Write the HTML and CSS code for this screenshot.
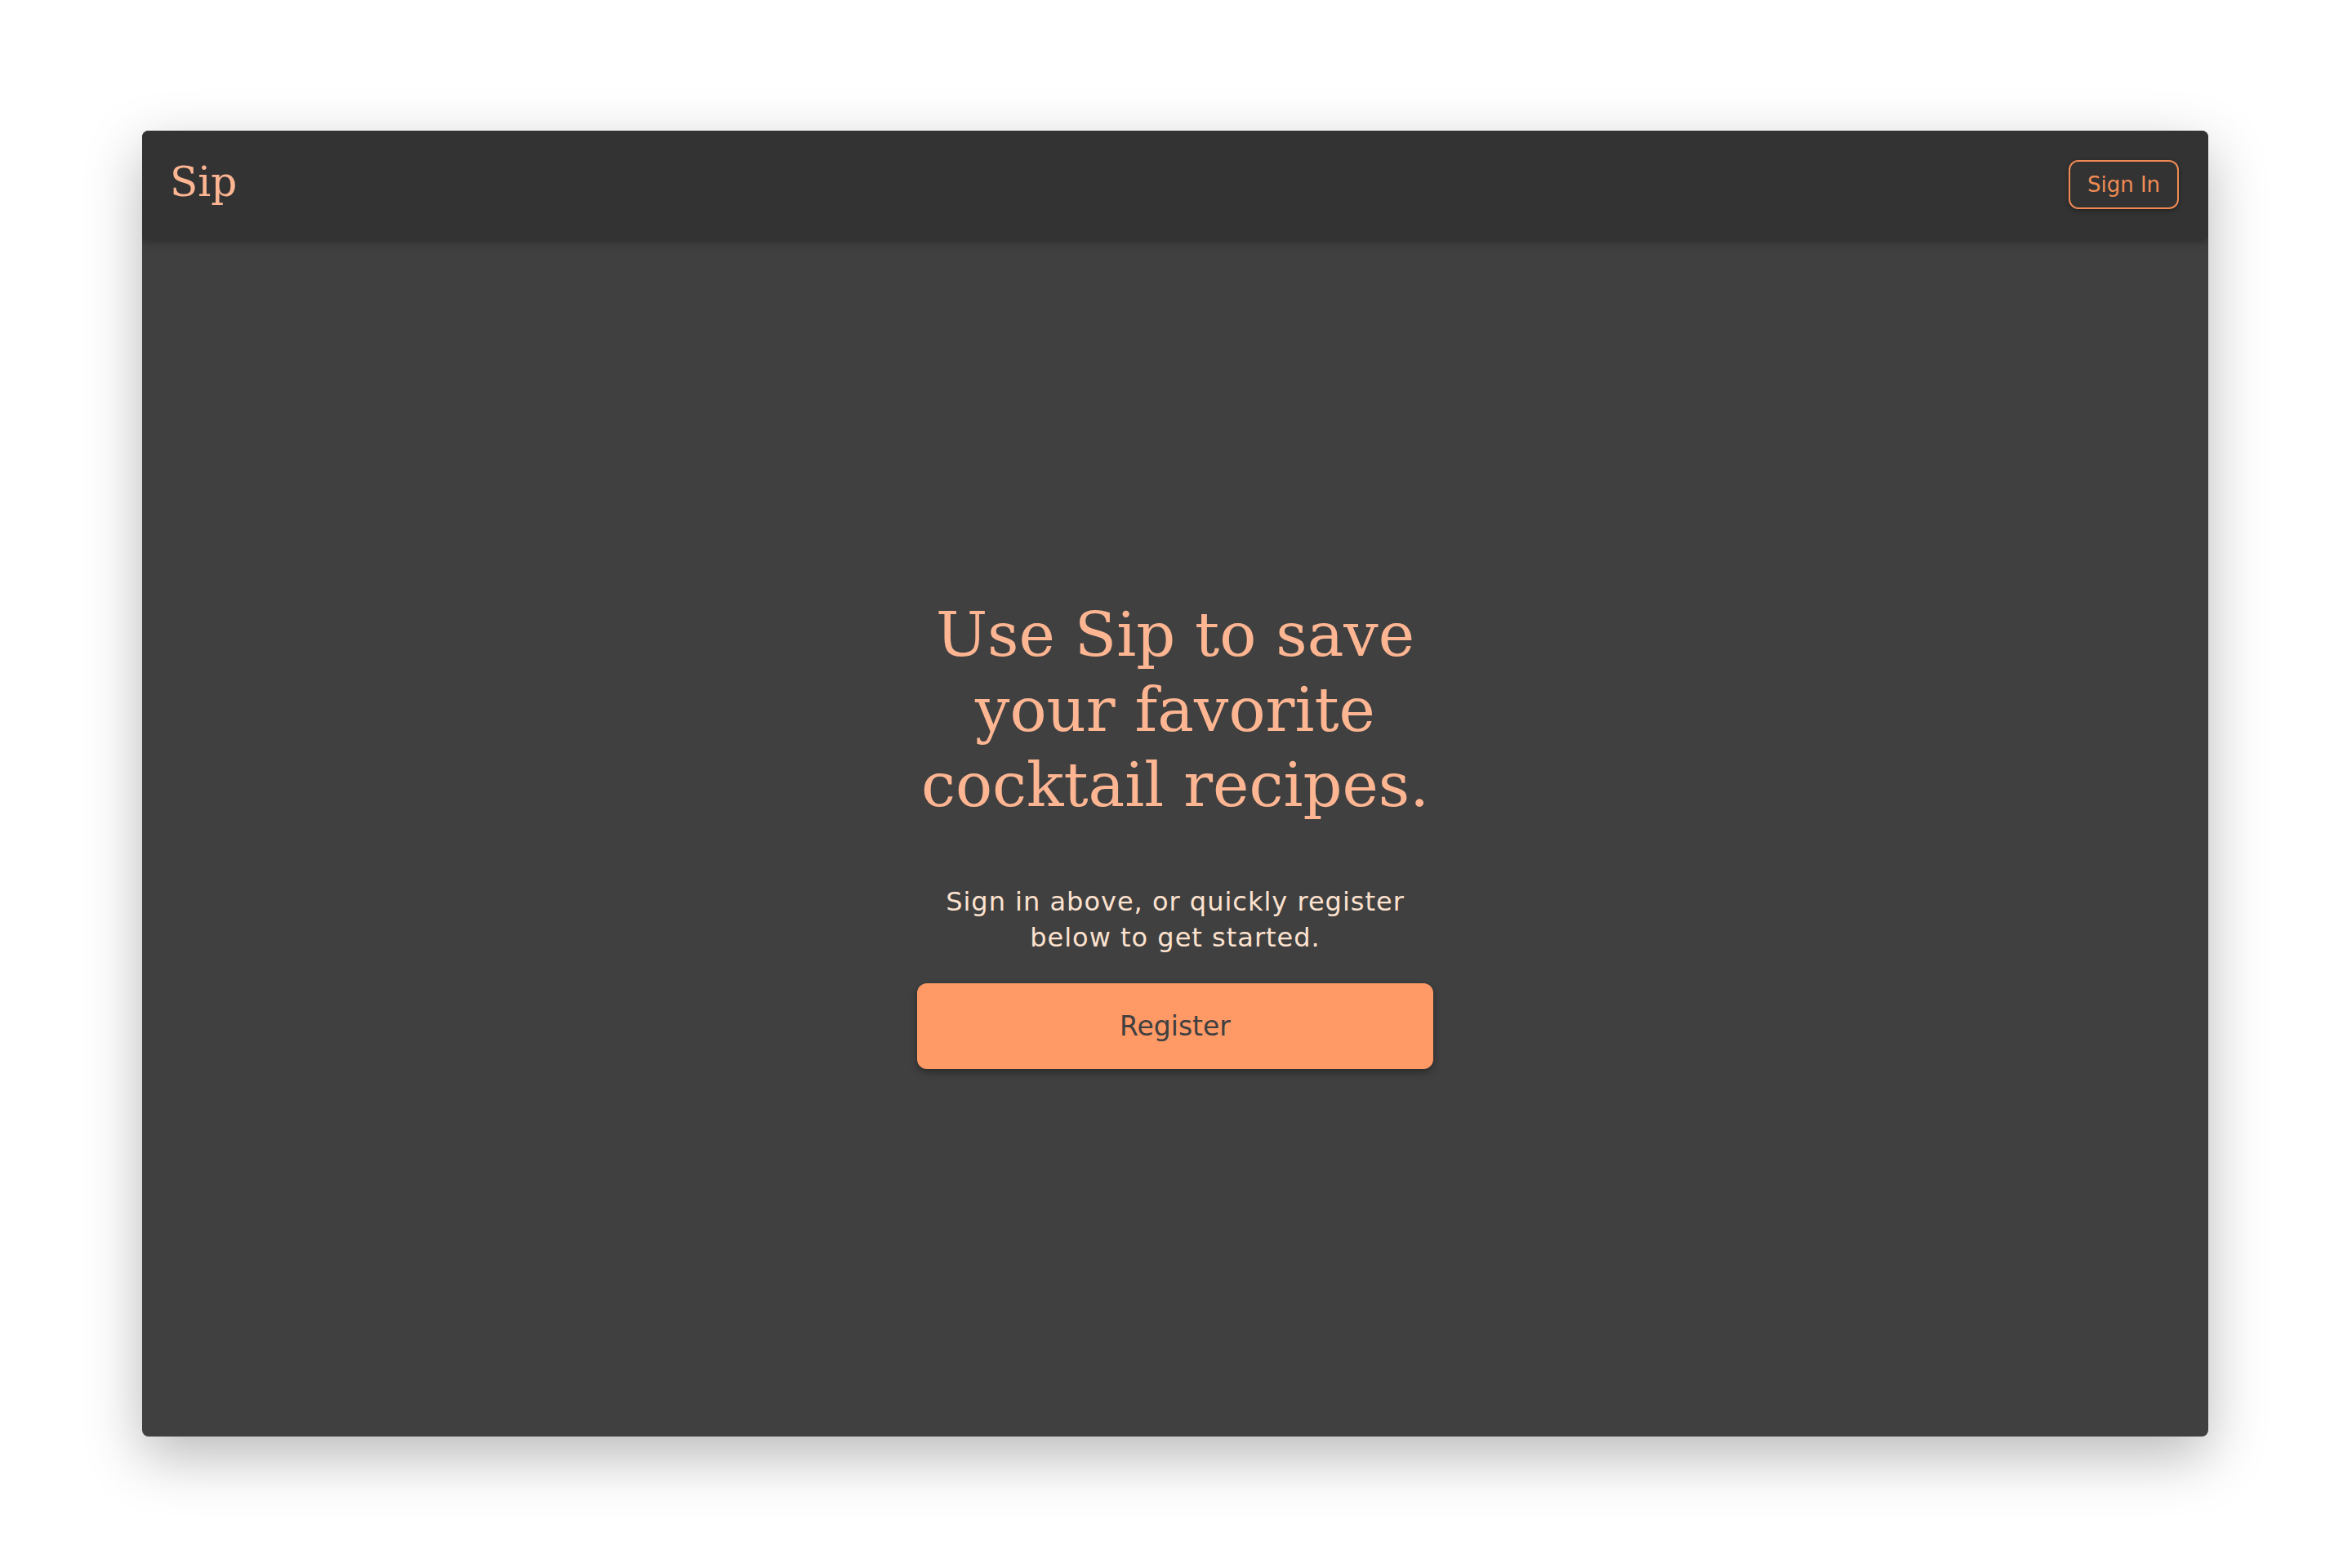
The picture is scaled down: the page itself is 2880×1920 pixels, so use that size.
FILE: index.html
```html
<!DOCTYPE html>
<html>
<head>
<meta charset="utf-8">
<title>Sip</title>
<link rel="stylesheet" href="styles.css">
</head>
<body>
<div class="page">
  <div class="window">
    <header class="topbar">
      <div class="logo">Sip</div>
      <button class="signin">Sign In</button>
    </header>
    <main class="hero">
      <h1 class="headline">Use Sip to save<br>your favorite<br>cocktail recipes.</h1>
      <p class="lead">Sign in above, or quickly register<br>below to get started.</p>
      <button class="register">Register</button>
    </main>
  </div>
</div>
</body>
</html>
```

FILE: styles.css
```css
html, body {
  margin: 0;
  padding: 0;
  background: #ffffff;
}

.page {
  padding: 160px 176px 161px 174px;
}

.window {
  width: 2530px;
  height: 1599px;
  display: flex;
  flex-direction: column;
  background: #404040;
  border-radius: 8px;
  overflow: hidden;
  box-shadow: 0 24px 70px rgba(0, 0, 0, 0.28);
}

.topbar {
  position: relative;
  z-index: 2;
  height: 132px;
  flex: none;
  display: flex;
  align-items: center;
  justify-content: space-between;
  padding: 0 36px 0 34px;
  background: #333333;
  box-shadow: 0 4px 10px rgba(0, 0, 0, 0.3);
}

.logo {
  font-family: "DejaVu Serif", serif;
  font-size: 50px;
  color: #fdb592;
  line-height: 50px;
  margin-top: -6px;
}

.signin {
  width: 135px;
  height: 60px;
  border: 2px solid #ef8a54;
  border-radius: 12px;
  background: transparent;
  color: #f08b55;
  font-family: "DejaVu Sans", sans-serif;
  font-size: 26px;
  padding: 0;
  box-shadow: 0 2px 6px rgba(0, 0, 0, 0.35);
}

.hero {
  flex: 1;
  display: flex;
  flex-direction: column;
  align-items: center;
  justify-content: center;
  padding-bottom: 11px;
}

.headline {
  margin: 0;
  font-family: "DejaVu Serif", serif;
  font-weight: normal;
  font-size: 75px;
  line-height: 92px;
  text-align: center;
  color: #fdb592;
}

.lead {
  margin: 75px 0 34px;
  font-family: "DejaVu Sans", sans-serif;
  font-size: 32px;
  letter-spacing: 1px;
  line-height: 44px;
  text-align: center;
  color: #fde2cf;
}

.register {
  width: 632px;
  height: 105px;
  border: none;
  border-radius: 12px;
  background: #ff9966;
  color: #404040;
  font-family: "DejaVu Sans", sans-serif;
  font-size: 33px;
  padding: 0;
  box-shadow: 0 4px 10px rgba(0, 0, 0, 0.35);
}
```
